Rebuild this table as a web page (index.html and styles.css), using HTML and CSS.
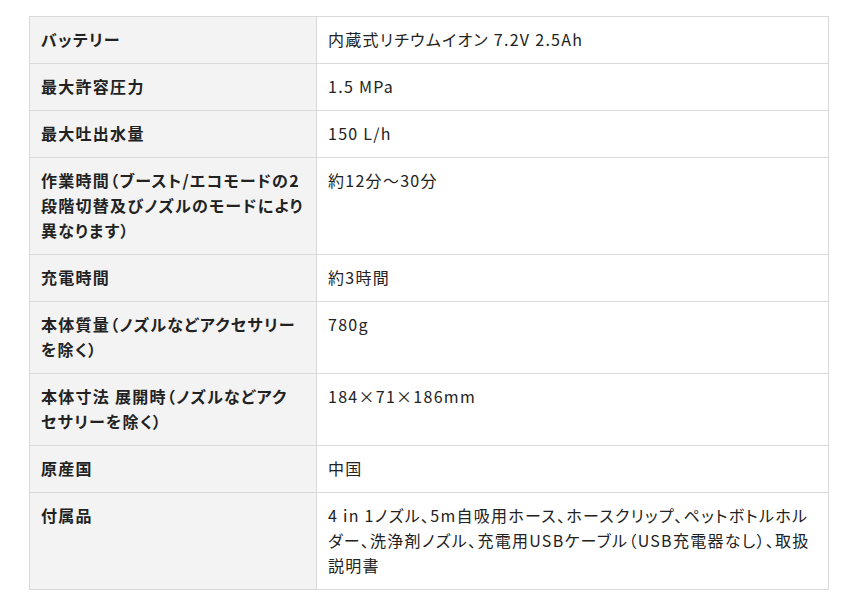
FILE: index.html
```html
<!DOCTYPE html>
<html lang="ja">
<head>
<meta charset="utf-8">
<link rel="stylesheet" href="styles.css">
</head>
<body>
<table class="spec">
  <tbody>
    <tr><th>バッテリー</th><td>内蔵式リチウムイオン 7.2V 2.5Ah</td></tr>
    <tr><th>最大許容圧力</th><td>1.5 MPa</td></tr>
    <tr><th>最大吐出水量</th><td>150 L/h</td></tr>
    <tr><th>作業時間（ブースト/エコモードの2段階切替及びノズルのモードにより異なります）</th><td>約12分～30分</td></tr>
    <tr><th>充電時間</th><td>約3時間</td></tr>
    <tr><th>本体質量（ノズルなどアクセサリーを除く）</th><td>780g</td></tr>
    <tr><th>本体寸法 展開時（ノズルなどアクセサリーを除く）</th><td>184×71×186mm</td></tr>
    <tr><th>原産国</th><td>中国</td></tr>
    <tr><th>付属品</th><td>4 in 1ノズル、5m自吸用ホース、ホースクリップ、ペットボトルホルダー、洗浄剤ノズル、充電用USBケーブル（USB充電器なし）、取扱説明書</td></tr>
  </tbody>
</table>
</body>
</html>
```
FILE: styles.css
```css
html, body {
  margin: 0;
  padding: 0;
  background: #ffffff;
}
body {
  padding: 16px 0 0 29px;
  font-family: "Noto Sans CJK JP", "Noto Sans", sans-serif;
  font-size: 16px;
  color: #222222;
}
.spec {
  width: 800px;
  border-collapse: collapse;
  table-layout: fixed;
}
.spec th,
.spec td {
  border: 1px solid #d9d9d9;
  padding: 10px 12px 11px 11px;
  line-height: 25px;
  text-align: left;
  vertical-align: top;
  letter-spacing: 0.08em;
  font-feature-settings: "palt";
}
.spec th {
  width: 287px;
  box-sizing: border-box;
  background: #f3f3f3;
  font-weight: 700;
}
.spec td {
  padding-left: 11px;
  font-weight: 400;
}
```
